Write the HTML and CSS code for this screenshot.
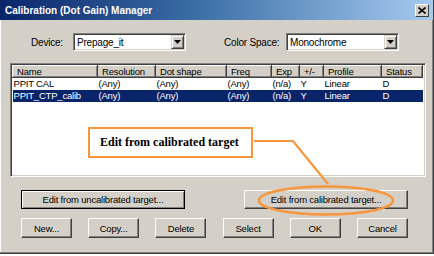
FILE: index.html
```html
<!DOCTYPE html>
<html lang="en">
<head>
    <meta charset="UTF-8">
    <title>Calibration (Dot Gain) Manager</title>
    <link rel="stylesheet" href="styles.css">
</head>
<body>
    <div class="window">
        <div class="titlebar">
            <span class="title">Calibration (Dot Gain) Manager</span>
            <span class="close">
                <svg width="8" height="7" viewBox="0 0 8 7"><path d="M0.5 0.5 L7.5 6.5 M7.5 0.5 L0.5 6.5" stroke="#000" stroke-width="1.6"/></svg>
            </span>
        </div>

        <div class="fields">
            <span class="lbl lbl-device">Device:</span>
            <div class="combo">
                <span class="combo-text">Prepage_it</span>
                <span class="combo-btn"><svg width="7" height="4" viewBox="0 0 7 4"><path d="M0 0 H7 L3.5 4 Z" fill="#000"/></svg></span>
            </div>
            <span class="lbl lbl-space">Color Space:</span>
            <div class="combo">
                <span class="combo-text">Monochrome</span>
                <span class="combo-btn"><svg width="7" height="4" viewBox="0 0 7 4"><path d="M0 0 H7 L3.5 4 Z" fill="#000"/></svg></span>
            </div>
        </div>

        <div class="list">
            <table class="grid">
                <thead>
                    <tr>
                        <th class="c-name">Name</th>
                        <th class="c-res">Resolution</th>
                        <th class="c-dot">Dot shape</th>
                        <th class="c-freq">Freq</th>
                        <th class="c-exp">Exp</th>
                        <th class="c-pm">+/-</th>
                        <th class="c-prof">Profile</th>
                        <th class="c-stat">Status</th>
                    </tr>
                </thead>
                <tbody>
                    <tr>
                        <td>PPIT CAL</td>
                        <td>(Any)</td>
                        <td>(Any)</td>
                        <td>(Any)</td>
                        <td>(n/a)</td>
                        <td>Y</td>
                        <td>Linear</td>
                        <td>D</td>
                    </tr>
                    <tr class="selected">
                        <td>PPIT_CTP_calib</td>
                        <td>(Any)</td>
                        <td>(Any)</td>
                        <td>(Any)</td>
                        <td>(n/a)</td>
                        <td>Y</td>
                        <td>Linear</td>
                        <td>D</td>
                    </tr>
                </tbody>
            </table>
        </div>

        <div class="btn-row wide">
            <button class="btn default">Edit from uncalibrated target...</button>
            <button class="btn">Edit from calibrated target...</button>
        </div>

        <div class="btn-row small">
            <button class="btn">New...</button>
            <button class="btn">Copy...</button>
            <button class="btn">Delete</button>
            <button class="btn">Select</button>
            <button class="btn">OK</button>
            <button class="btn">Cancel</button>
        </div>

        <!-- annotation drawn over the dialog -->
        <div class="callout">Edit from calibrated target</div>
        <svg class="marks" width="434" height="256" viewBox="0 0 434 256">
            <path d="M254 141 H293 L328 184" fill="none" stroke="#f7963c" stroke-width="2.2"/>
            <ellipse cx="326" cy="200.5" rx="67" ry="14" fill="none" stroke="#f7963c" stroke-width="2.6"/>
        </svg>
    </div>
</body>
</html>
```

FILE: styles.css
```css
body {
    margin: 0;
    padding: 0;
    background: #ffffff;
    font-family: 'Liberation Sans', Arial, sans-serif;
    font-size: 9.5px;
    letter-spacing: -0.2px;
    color: #000;
}
.window {
    position: relative;
    width: 434px;
    height: 254px;
    box-sizing: border-box;
    background: #d4d0c8;
    border-right: 1px solid #404040;
    border-bottom: 1px solid #404040;
    box-shadow: inset -1px -1px 0 #808080, inset 1px 0 0 #ffffff;
}
.titlebar {
    display: flex;
    align-items: center;
    height: 20px;
    background: linear-gradient(to right, #0a246a, #3a6ea5 45%, #a6caf0);
}
.title {
    padding-left: 5px;
    padding-top: 1px;
    color: #fff;
    font-weight: bold;
    font-size: 10px;
    letter-spacing: 0;
}
.close {
    display: flex;
    align-items: center;
    justify-content: center;
    margin-left: auto;
    margin-right: 4px;
    width: 12px;
    height: 11px;
    background: #d4d0c8;
    border-top: 1px solid #fff;
    border-left: 1px solid #fff;
    border-right: 1px solid #404040;
    border-bottom: 1px solid #404040;
}

.fields {
    display: flex;
    align-items: center;
    margin-top: 13px;
    padding-left: 31px;
    height: 18px;
    font-size: 10px;
}
.lbl-device {
    width: 42px;
}
.lbl-space {
    margin-left: 38px;
    width: 62px;
}
.combo {
    display: flex;
    align-items: center;
    box-sizing: border-box;
    width: 113px;
    height: 18px;
    background: #fff;
    border-top: 1px solid #808080;
    border-left: 1px solid #808080;
    border-right: 1px solid #fff;
    border-bottom: 1px solid #fff;
    box-shadow: inset 1px 1px 0 #404040, inset -1px -1px 0 #d4d0c8;
}
.combo-text {
    flex: 1;
    padding-left: 3px;
}
.combo-btn {
    display: flex;
    align-items: center;
    justify-content: center;
    box-sizing: border-box;
    width: 13px;
    height: 14px;
    margin-right: 1px;
    background: #d4d0c8;
    border-top: 1px solid #d4d0c8;
    border-left: 1px solid #d4d0c8;
    border-right: 1px solid #404040;
    border-bottom: 1px solid #404040;
    box-shadow: inset 1px 1px 0 #fff, inset -1px -1px 0 #808080;
}

.list {
    box-sizing: border-box;
    margin: 12px 0 0 10px;
    width: 416px;
    height: 114px;
    background: #fff;
    border-top: 1px solid #808080;
    border-left: 1px solid #808080;
    border-right: 1px solid #fff;
    border-bottom: 1px solid #fff;
    box-shadow: inset 1px 1px 0 #404040, inset -1px -1px 0 #d4d0c8;
    padding: 1px;
}
.grid {
    border-collapse: collapse;
    table-layout: fixed;
    width: 410px;
}
.grid th {
    box-sizing: border-box;
    height: 12px;
    padding: 0 0 0 4px;
    background: #d4d0c8;
    font-weight: normal;
    text-align: left;
    line-height: 10px;
    border-top: 1px solid #fff;
    border-left: 1px solid #fff;
    border-right: 1px solid #404040;
    border-bottom: 1px solid #404040;
    box-shadow: inset -1px -1px 0 #808080;
}
.grid td {
    height: 12px;
    padding: 0 0 0 1px;
    line-height: 12px;
    white-space: nowrap;
    overflow: hidden;
}
.grid tr.selected td {
    background: #0a246a;
    color: #fff;
}
.c-name { width: 85px; }
.c-res { width: 58px; }
.c-dot { width: 71px; }
.c-freq { width: 45px; }
.c-exp { width: 28px; }
.c-pm { width: 24px; }
.c-prof { width: 58px; }
.c-stat { width: 41px; }

.btn-row {
    display: flex;
    margin-left: 21px;
}
.btn-row.wide {
    margin-top: 13px;
    gap: 59px;
}
.btn-row.wide .btn {
    width: 164px;
    height: 19px;
}
.btn-row.small {
    margin-top: 9px;
    width: 387px;
    justify-content: space-between;
}
.btn-row.small .btn {
    width: 51px;
    height: 20px;
}
.btn {
    box-sizing: border-box;
    padding: 0;
    margin: 0;
    font-family: inherit;
    font-size: inherit;
    letter-spacing: inherit;
    color: #000;
    background: #d4d0c8;
    border-top: 1px solid #fff;
    border-left: 1px solid #fff;
    border-right: 1px solid #404040;
    border-bottom: 1px solid #404040;
    box-shadow: inset -1px -1px 0 #808080;
}
.btn.default {
    border: 1px solid #000;
    box-shadow: inset 1px 1px 0 #fff, inset -1px -1px 0 #808080;
}

.callout {
    position: absolute;
    left: 88px;
    top: 127px;
    box-sizing: border-box;
    width: 165px;
    height: 31px;
    padding-left: 10px;
    background: #fff;
    border: 2.5px solid #f7963c;
    font-family: 'Liberation Serif', 'Times New Roman', serif;
    font-weight: bold;
    font-size: 12px;
    letter-spacing: 0;
    line-height: 26px;
}
.marks {
    position: absolute;
    left: 0;
    top: 0;
    pointer-events: none;
}
```
